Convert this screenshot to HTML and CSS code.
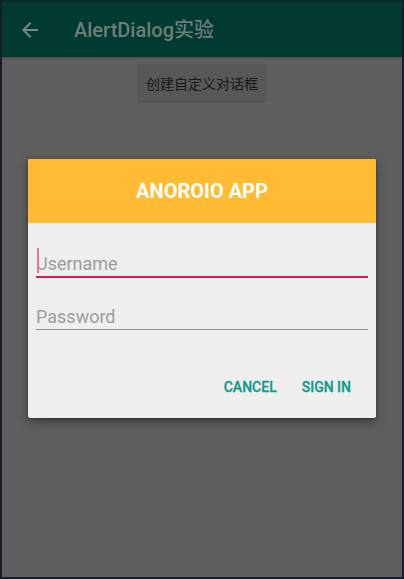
FILE: index.html
```html
<!DOCTYPE html>
<html>
<head>
<meta charset="utf-8">
<link rel="stylesheet" href="styles.css">
</head>
<body>
<div class="screen">
  <header class="appbar">
    <svg class="back" width="24" height="24" viewBox="0 0 24 24"><path d="M20 11H7.83l5.59-5.59L12 4l-8 8 8 8 1.41-1.41L7.83 13H20v-2z" fill="#778884"/></svg>
    <span class="title">AlertDialog实验</span>
  </header>
  <main class="content">
    <div class="btn">创建自定义对话框</div>
  </main>
  <div class="scrim">
    <div class="dialog">
      <div class="dlg-head">ANOROIO APP</div>
      <div class="dlg-body">
        <div class="field focused"><span class="cursor"></span>Username</div>
        <div class="field">Password</div>
        <div class="actions">
          <span class="action">CANCEL</span>
          <span class="action">SIGN IN</span>
        </div>
      </div>
    </div>
  </div>
</div>
</body>
</html>
```

FILE: styles.css
```css
html, body {
  margin: 0;
  padding: 0;
  background: #1b1d2b;
}
body {
  width: 404px;
  height: 579px;
  overflow: hidden;
  font-family: Roboto, "Noto Sans CJK SC", sans-serif;
}
.screen {
  position: relative;
  margin: 0 2px;
  width: 400px;
  height: 577px;
  background: #5f5f5f;
}
.appbar {
  box-sizing: border-box;
  height: 57px;
  border-top: 2px solid #042a23;
  background: #003a30;
  display: flex;
  align-items: center;
  box-shadow: 0 1px 2px rgba(0,0,0,0.25);
}
.back {
  margin-left: 16px;
  display: block;
}
.title {
  margin-left: 32px;
  font-size: 20px;
  line-height: 28px;
  font-weight: 500;
  color: #6e7e7a;
  font-family: Roboto, "Noto Sans CJK SC", sans-serif;
}
.content {
  display: flex;
  justify-content: center;
  padding-top: 7px;
}
.btn {
  height: 37px;
  padding: 0 8px;
  display: flex;
  align-items: center;
  background: #585858;
  border-radius: 2px;
  box-shadow: 0 1px 2px rgba(0,0,0,0.2);
  font-family: "Noto Sans CJK SC", sans-serif;
  font-size: 14px;
  color: #191919;
}
.scrim {
  position: absolute;
  inset: 0;
}
.dialog {
  position: absolute;
  left: 26px;
  top: 159px;
  width: 348px;
  height: 259px;
  background: #eeeeee;
  border-radius: 2px;
  box-shadow: 0 4px 12px rgba(0,0,0,0.35), 0 1px 3px rgba(0,0,0,0.3);
  overflow: hidden;
}
.dlg-head {
  height: 64px;
  background: #ffbb33;
  display: flex;
  align-items: center;
  justify-content: center;
  color: #ffffff;
  font-weight: 700;
  font-size: 20px;
}
.dlg-body {
  padding: 0 8px;
}
.field {
  position: relative;
  height: 24px;
  line-height: 24px;
  font-size: 18px;
  color: #9c9c9c;
  border-bottom: 1px solid #8c8c8c;
  margin-top: 27px;
}
.field.focused {
  margin-top: 29px;
  border-bottom: 2px solid #d81b60;
}
.cursor {
  position: absolute;
  left: 1px;
  top: -4px;
  width: 2px;
  height: 25px;
  background: #e07aa0;
}
.actions {
  display: flex;
  justify-content: flex-end;
  gap: 25px;
  padding-right: 17px;
  margin-top: 49px;
}
.action {
  font-size: 14px;
  line-height: 16px;
  font-weight: 500;
  color: #129a8b;
  -webkit-text-stroke: 0.3px #129a8b;
}
```
